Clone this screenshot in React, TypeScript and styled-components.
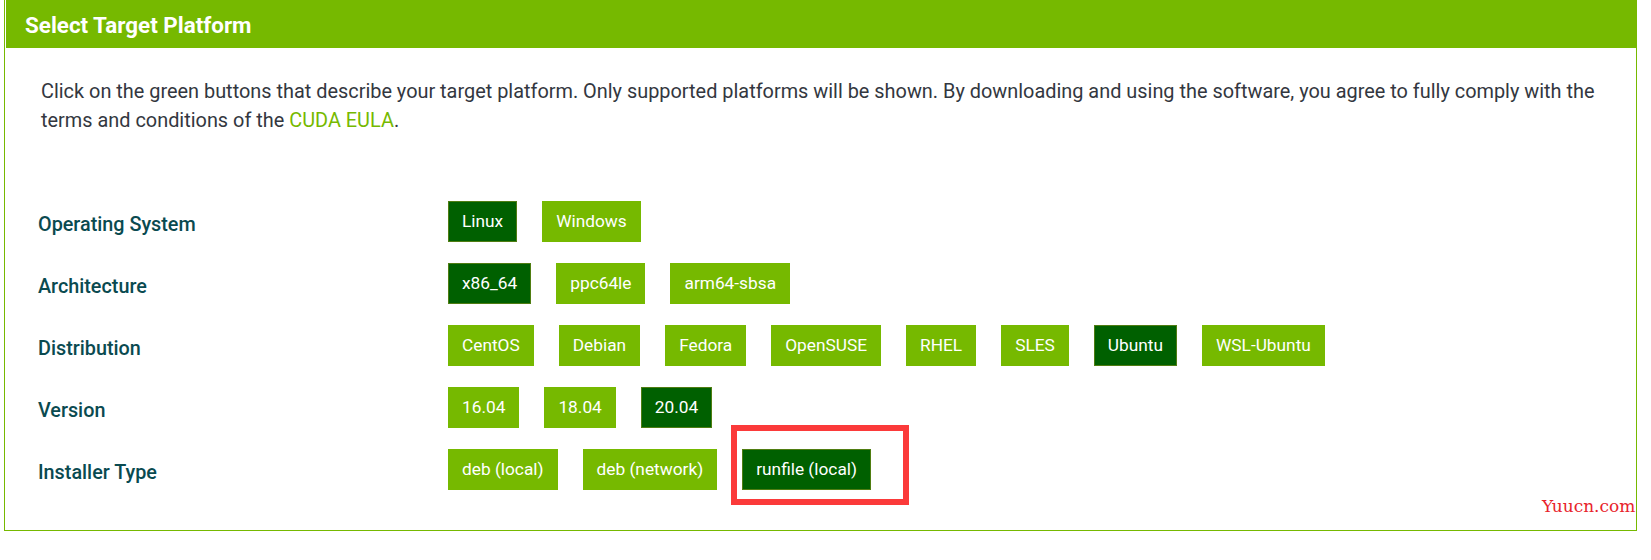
import React from "react";
import styled, { createGlobalStyle } from "styled-components";

const Global = createGlobalStyle`
  html, body { margin: 0; padding: 0; background: #ffffff; }
  body { font-family: Roboto, "Liberation Sans", sans-serif; }
`;

const Page = styled.div`
  position: relative;
  width: 1651px;
  height: 560px;
  overflow: hidden;
  background: #ffffff;
`;

const Panel = styled.section`
  margin-left: 4px;
  width: 1633px;
  height: 531px;
  box-sizing: border-box;
  border: 1px solid #76b900;
  border-top: 0;
  padding: 0 0 0 1px;
  display: flex;
  flex-direction: column;
`;

const Header = styled.header`
  height: 48px;
  background: #76b900;
  display: flex;
  align-items: center;
  padding-left: 19px;
  padding-top: 1px;
  box-sizing: border-box;
`;

const Title = styled.h2`
  margin: 0;
  font-family: Roboto, "Liberation Sans", sans-serif;
  font-weight: 700;
  font-size: 22.4px;
  color: #ffffff;
`;

const Body = styled.div`
  padding: 29px 0 0 32px;
  display: flex;
  flex-direction: column;
`;

const Intro = styled.p`
  margin: 0 0 0 3px;
  width: 1575px;
  font-size: 19.9px;
  line-height: 29px;
  color: #333740;
`;

const Link = styled.a`
  color: #76b900;
  text-decoration: none;
`;

const Grid = styled.div`
  margin-top: 66px;
  display: grid;
  grid-template-columns: 410px 1fr;
  row-gap: 21px;
`;

const Label = styled.div`
  height: 41px;
  box-sizing: border-box;
  padding-top: 10px;
  font-size: 19.8px;
  line-height: 28px;
  font-weight: 500;
  color: #0a4a50;
`;

const Options = styled.div`
  display: flex;
  gap: 25px;
`;

const OptionWrap = styled.div`
  position: relative;
  display: flex;
`;

const Option = styled.button<{ $selected?: boolean }>`
  height: 41px;
  box-sizing: border-box;
  padding: 0 13px;
  border: 1px solid ${(p) => (p.$selected ? "#4f7d12" : "#76b900")};
  background: ${(p) => (p.$selected ? "#006000" : "#76b900")};
  color: #ffffff;
  font-family: Roboto, "Liberation Sans", sans-serif;
  font-size: 17.3px;
  font-weight: 400;
  line-height: 39px;
  white-space: nowrap;
  cursor: pointer;
`;

const Highlight = styled.div`
  position: absolute;
  left: -11px;
  top: -24px;
  width: 178px;
  height: 80px;
  box-sizing: border-box;
  border: 6px solid #fb3a3a;
  pointer-events: none;
`;

const Watermark = styled.div`
  position: absolute;
  left: 1542px;
  top: 496px;
  font-family: "DejaVu Serif", "Liberation Serif", serif;
  font-size: 17px;
  line-height: 20px;
  color: #e8232b;
`;

type Row = { label: string; options: string[]; selected: string; highlight?: string };

const rows: Row[] = [
  { label: "Operating System", options: ["Linux", "Windows"], selected: "Linux" },
  { label: "Architecture", options: ["x86_64", "ppc64le", "arm64-sbsa"], selected: "x86_64" },
  {
    label: "Distribution",
    options: ["CentOS", "Debian", "Fedora", "OpenSUSE", "RHEL", "SLES", "Ubuntu", "WSL-Ubuntu"],
    selected: "Ubuntu",
  },
  { label: "Version", options: ["16.04", "18.04", "20.04"], selected: "20.04" },
  {
    label: "Installer Type",
    options: ["deb (local)", "deb (network)", "runfile (local)"],
    selected: "runfile (local)",
    highlight: "runfile (local)",
  },
];

export default function App() {
  return (
    <Page>
      <Global />
      <Panel>
        <Header>
          <Title>Select Target Platform</Title>
        </Header>
        <Body>
          <Intro>
            Click on the green buttons that describe your target platform. Only supported platforms will be
            shown. By downloading and using the software, you agree to fully comply with the terms and
            conditions of the <Link href="#">CUDA EULA</Link>.
          </Intro>
          <Grid>
            {rows.map((r) => (
              <React.Fragment key={r.label}>
                <Label>{r.label}</Label>
                <Options>
                  {r.options.map((o) => (
                    <OptionWrap key={o}>
                      <Option $selected={o === r.selected}>{o}</Option>
                      {r.highlight === o && <Highlight />}
                    </OptionWrap>
                  ))}
                </Options>
              </React.Fragment>
            ))}
          </Grid>
        </Body>
      </Panel>
      <Watermark>Yuucn.com</Watermark>
    </Page>
  );
}
